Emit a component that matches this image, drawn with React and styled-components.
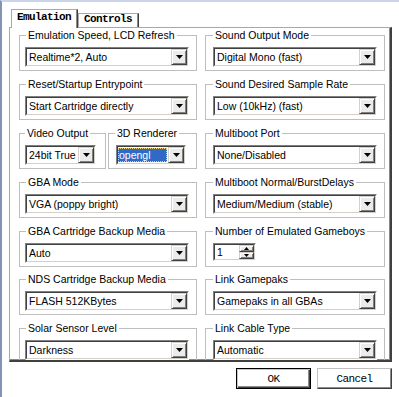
import React from "react";
import styled, { createGlobalStyle, css } from "styled-components";

const GlobalStyle = createGlobalStyle`
  html, body { margin: 0; padding: 0; background: #fff; }
  body { width: 399px; height: 397px; overflow: hidden; }
`;

const Window = styled.div`
  box-sizing: border-box;
  width: 399px;
  height: 397px;
  background: #fff;
  border-top: 2px solid #cbd6ea;
  border-left: 2px solid #8592b4;
  display: flex;
  flex-direction: column;
  font-family: "Liberation Sans", Arial, sans-serif;
  font-size: 10.5px;
  color: #000;
`;

const TabStrip = styled.div`
  display: flex;
  align-items: flex-end;
  height: 18px;
  margin-top: 7px;
  padding-left: 9px;
  position: relative;
  z-index: 2;
`;

const Tab = styled.div`
  box-sizing: border-box;
  background: #fff;
  border-top: 1px solid #a8a8a8;
  border-left: 1px solid #a8a8a8;
  border-right: 1px solid #404040;
  box-shadow: inset -1px 0 0 #8a8a8a;
  font-family: "Liberation Mono", "Courier New", monospace;
  font-weight: bold;
  font-size: 11px;
  letter-spacing: -0.6px;
  line-height: 11px;
  white-space: nowrap;
  ${(p) =>
    p.$active
      ? css`
          height: 19px;
          margin-bottom: -1px;
          padding: 2px 6px 0 5px;
        `
      : css`
          height: 14px;
          padding: 0 6px 0 5px;
        `}
`;

const Panel = styled.div`
  box-sizing: border-box;
  flex: none;
  width: 383px;
  height: 335px;
  margin-left: 7px;
  border-top: 1px solid #a8a8a8;
  border-left: 1px solid #a8a8a8;
  border-right: 2px solid #404040;
  border-bottom: 2px solid #404040;
  box-shadow: inset -1px -1px 0 #8a8a8a;
  padding: 1px 5px 0 9px;
  overflow: hidden;
  position: relative;
  z-index: 1;
`;

const Columns = styled.div`
  display: grid;
  grid-template-columns: 178px 180px;
  column-gap: 8px;
  align-items: start;
`;

const Column = styled.div`
  display: flex;
  flex-direction: column;
  gap: 7px;
`;

const SplitRow = styled.div`
  display: flex;
  gap: 2px;
  margin-top: ${(p) => p.$mt || 0}px;
`;

const Group = styled.fieldset`
  box-sizing: border-box;
  margin: 0;
  margin-top: ${(p) => p.$mt || 0}px;
  padding: 0;
  min-width: 0;
  width: ${(p) => (p.$w ? `${p.$w}px` : "auto")};
  border: 1px solid #bebebe;
`;

const Legend = styled.legend`
  margin-left: ${(p) => p.$lm}px;
  padding: 0 2px;
  font-size: 10.5px;
  line-height: 13px;
  white-space: nowrap;
`;

const GroupBody = styled.div`
  display: flex;
  align-items: flex-start;
  min-height: 20px;
  padding: 5px 0 3px ${(p) => p.$pl}px;
`;

const SunkenOuter = styled.div`
  box-sizing: border-box;
  flex: none;
  width: ${(p) => p.$w}px;
  height: ${(p) => p.$h || 20}px;
  border: 1px solid;
  border-color: #808080 #ffffff #ffffff #808080;
`;

const SunkenInner = styled.div`
  box-sizing: border-box;
  height: 100%;
  display: flex;
  background: #fff;
  border: 1px solid;
  border-color: #404040 #d4d0c8 #d4d0c8 #404040;
`;

const ComboText = styled.div`
  flex: 1;
  min-width: 0;
  white-space: nowrap;
  overflow: hidden;
  padding-left: 2px;
  line-height: 16px;
  ${(p) =>
    p.$selected &&
    css`
      margin: 1px 1px 1px 0;
      padding-left: 1px;
      line-height: 14px;
      background: #316ac5;
      color: #fff;
      outline: 1px dotted #e8d070;
      outline-offset: -1px;
    `}
`;

const RaisedButton = styled.div`
  box-sizing: border-box;
  flex: none;
  width: ${(p) => p.$w || 16}px;
  height: ${(p) => (p.$h ? `${p.$h}px` : "auto")};
  display: flex;
  align-items: center;
  justify-content: center;
  background: #ebebeb;
  border: 1px solid;
  border-color: #d4d0c8 #404040 #404040 #d4d0c8;
  box-shadow: inset 1px 1px 0 #fff, inset -1px -1px 0 #808080;
`;

const SpinColumn = styled.div`
  display: flex;
  flex-direction: column;
  flex: none;
`;

const SpinText = styled.div`
  flex: 1;
  padding-left: 2px;
  line-height: 14px;
`;

const ButtonRow = styled.div`
  display: flex;
  justify-content: flex-end;
  gap: 6px;
  padding: 6px 7px 0 0;
`;

const DialogButton = styled.button`
  box-sizing: border-box;
  width: 75px;
  height: 21px;
  padding: 0;
  background: #fff;
  color: #000;
  font-family: "Liberation Mono", "Courier New", monospace;
  font-size: 11px;
  letter-spacing: -0.6px;
  border: 1px solid;
  ${(p) =>
    p.$default
      ? css`
          border-color: #000;
          box-shadow: inset 1px 1px 0 #c8c8c8, inset -1px -1px 0 #404040,
            inset -2px -2px 0 #8a8a8a;
        `
      : css`
          border-color: #c0c0c0 #404040 #404040 #c0c0c0;
          box-shadow: inset -1px -1px 0 #8a8a8a;
        `}
`;

const Arrow = ({ w = 7, h = 4, up = false }) => (
  <svg width={w} height={h} viewBox={`0 0 ${w} ${h}`}>
    <polygon
      points={up ? `0,${h} ${w},${h} ${w / 2},0` : `0,0 ${w},0 ${w / 2},${h}`}
      fill="#000"
    />
  </svg>
);

const Combo = ({ w, value, selected }) => (
  <SunkenOuter $w={w}>
    <SunkenInner>
      <ComboText $selected={selected}>{value}</ComboText>
      <RaisedButton>
        <Arrow />
      </RaisedButton>
    </SunkenInner>
  </SunkenOuter>
);

const Spinner = ({ value }) => (
  <SunkenOuter $w={43} $h={18}>
    <SunkenInner>
      <SpinText>{value}</SpinText>
      <SpinColumn>
        <RaisedButton $w={15} $h={7}>
          <Arrow w={5} h={3} up />
        </RaisedButton>
        <RaisedButton $w={15} $h={7}>
          <Arrow w={5} h={3} />
        </RaisedButton>
      </SpinColumn>
    </SunkenInner>
  </SunkenOuter>
);

const GroupBox = ({ label, lm, pl, w, mt, children }) => (
  <Group $w={w} $mt={mt}>
    <Legend $lm={lm}>{label}</Legend>
    <GroupBody $pl={pl}>{children}</GroupBody>
  </Group>
);

const leftGroups = [
  { label: "Emulation Speed, LCD Refresh", value: "Realtime*2, Auto" },
  { label: "Reset/Startup Entrypoint", value: "Start Cartridge directly" },
  { split: true },
  { label: "GBA Mode", value: "VGA (poppy bright)" },
  { label: "GBA Cartridge Backup Media", value: "Auto" },
  { label: "NDS Cartridge Backup Media", value: "FLASH 512KBytes", mt: -1 },
  { label: "Solar Sensor Level", value: "Darkness" },
];

const rightGroups = [
  { label: "Sound Output Mode", value: "Digital Mono (fast)" },
  { label: "Sound Desired Sample Rate", value: "Low (10kHz) (fast)" },
  { label: "Multiboot Port", value: "None/Disabled" },
  { label: "Multiboot Normal/BurstDelays", value: "Medium/Medium (stable)" },
  { label: "Number of Emulated Gameboys", spin: "1" },
  { label: "Link Gamepaks", value: "Gamepaks in all GBAs", mt: -1 },
  { label: "Link Cable Type", value: "Automatic" },
];

export default function App() {
  return (
    <>
      <GlobalStyle />
      <Window>
        <TabStrip>
          <Tab $active>Emulation</Tab>
          <Tab>Controls</Tab>
        </TabStrip>
        <Panel>
          <Columns>
            <Column>
              {leftGroups.map((g, i) =>
                g.split ? (
                  <SplitRow key={i}>
                    <GroupBox label="Video Output" lm={5} pl={5} w={87}>
                      <Combo w={71} value="24bit True" />
                    </GroupBox>
                    <GroupBox label="3D Renderer" lm={6} pl={7} w={89}>
                      <Combo w={70} value="opengl" selected />
                    </GroupBox>
                  </SplitRow>
                ) : (
                  <GroupBox key={i} label={g.label} lm={6} pl={5} mt={g.mt}>
                    <Combo w={164} value={g.value} />
                  </GroupBox>
                )
              )}
            </Column>
            <Column>
              {rightGroups.map((g, i) => (
                <GroupBox key={i} label={g.label} lm={7} pl={7} mt={g.mt}>
                  {g.spin ? <Spinner value={g.spin} /> : <Combo w={164} value={g.value} />}
                </GroupBox>
              ))}
            </Column>
          </Columns>
        </Panel>
        <ButtonRow>
          <DialogButton $default>OK</DialogButton>
          <DialogButton>Cancel</DialogButton>
        </ButtonRow>
      </Window>
    </>
  );
}
